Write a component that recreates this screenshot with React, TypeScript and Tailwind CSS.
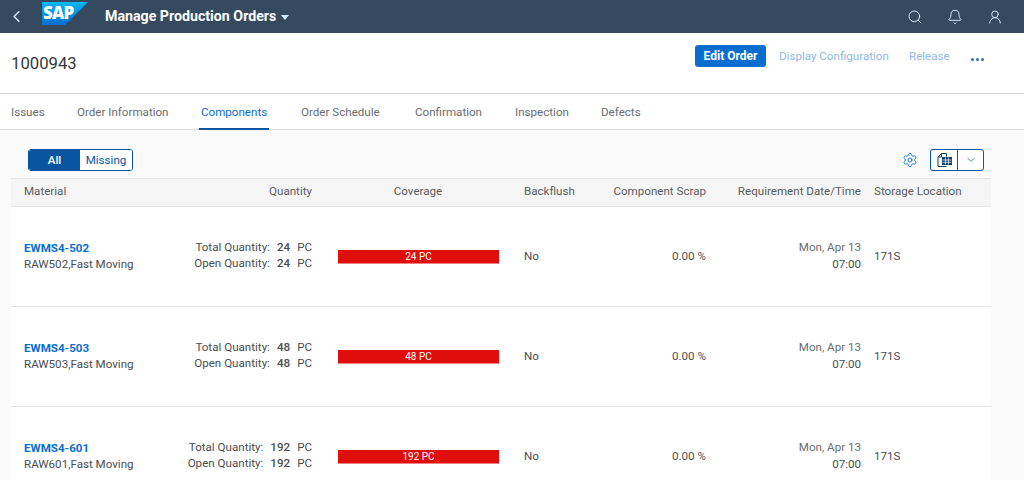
import React from 'react';
import { ChevronLeft, ChevronDown, Search, Bell, UserRound, Settings } from 'lucide-react';

const font = { fontFamily: 'Roboto, "Liberation Sans", sans-serif' };

const tabs = [
  { label: 'Issues', cls: 'ml-[11px] w-[66px]' },
  { label: 'Order Information', cls: 'w-[124px]' },
  { label: 'Components', cls: 'w-[100px]', active: true },
  { label: 'Order Schedule', cls: 'w-[114px]' },
  { label: 'Confirmation', cls: 'w-[100px]' },
  { label: 'Inspection', cls: 'w-[86px]' },
  { label: 'Defects', cls: 'w-[60px]' },
];

const rows = [
  { id: 'EWMS4-502', desc: 'RAW502,Fast Moving', qty: '24' },
  { id: 'EWMS4-503', desc: 'RAW503,Fast Moving', qty: '48' },
  { id: 'EWMS4-601', desc: 'RAW601,Fast Moving', qty: '192' },
];

const gridCols = 'grid grid-cols-[180px_134px_186px_88px_120px_142px_130px]';

function SapLogo() {
  return (
    <svg width="46" height="23" viewBox="0 0 46 23" className="shrink-0">
      <defs>
        <linearGradient id="sapBlue" x1="0" y1="0" x2="0" y2="1">
          <stop offset="0" stopColor="#00b8f1" />
          <stop offset="1" stopColor="#0a6ed1" />
        </linearGradient>
      </defs>
      <polygon points="0,0 46,0 23,23 0,23" fill="url(#sapBlue)" />
      <text x="1" y="17" fill="#fff" fontSize="17" fontWeight="800" letterSpacing="-0.8" fontFamily="Open Sans, sans-serif">
        SAP
      </text>
    </svg>
  );
}

function TableIcon() {
  return (
    <svg width="16" height="16" viewBox="0 0 16 16" fill="none" stroke="#0b3f73" strokeWidth="1">
      <path d="M5.5 1.5h5v3M5.5 1.5L2 5v9.5h8.5" />
      <path d="M2 5h3.5V1.5" />
      <rect x="6.5" y="5.5" width="9" height="7" fill="#0b3f73" />
      <path d="M6.5 8h9M6.5 10.3h9M9.5 5.5v7M12.5 5.5v7" stroke="#fff" strokeWidth="0.7" />
    </svg>
  );
}

function Row({ id, desc, qty }: { id: string; desc: string; qty: string }) {
  return (
    <div className={`${gridCols} h-[100px] items-center border-b border-[#e5e5e5] bg-white text-[11.6px] text-[#4a4d50]`}>
      <div className="-mt-[2px] pl-[13px]">
        <div className="leading-[16px] font-bold text-[#0a6ed1]">{id}</div>
        <div className="leading-[16px]">{desc}</div>
      </div>
      <div className="-mt-[3px] pr-[13px] leading-[16.5px]">
        <div className="flex justify-end whitespace-nowrap">
          Total Quantity:<span className="ml-[7px] font-medium">{qty}</span>
          <span className="ml-[7px]">PC</span>
        </div>
        <div className="flex justify-end whitespace-nowrap">
          Open Quantity:<span className="ml-[7px] font-medium">{qty}</span>
          <span className="ml-[7px]">PC</span>
        </div>
      </div>
      <div className="pl-[13px] pr-[12px]">
        <div className="flex h-[14px] items-center justify-center border-b border-[#f08080] bg-[#e00d0d] text-[10px] text-white">
          {qty} PC
        </div>
      </div>
      <div className="pl-[13px]">No</div>
      <div className="pr-[13px] text-right">0.00 %</div>
      <div className="-mt-[2px] text-right leading-[16.5px]">
        <div className="text-[#6a6d70]">Mon, Apr 13</div>
        <div>07:00</div>
      </div>
      <div className="pl-[13px]">171S</div>
    </div>
  );
}

export default function App() {
  return (
    <div className="flex h-screen w-full flex-col overflow-hidden bg-[#fafafa]" style={font}>
      {/* Shell bar */}
      <div className="flex h-[33px] shrink-0 items-center bg-[#354a5f] text-white">
        <ChevronLeft className="ml-[7px] h-[19px] w-[19px] text-[#d1e8ff]" strokeWidth={2} />
        <div className="ml-[16px] -mt-[7px]">
          <SapLogo />
        </div>
        <span className="ml-[17px] text-[14.2px] font-bold text-white">Manage Production Orders</span>
        <span className="ml-[5px] mt-[1px] h-0 w-0 border-x-[4px] border-t-[5px] border-x-transparent border-t-[#d1e8ff]" />
        <div className="ml-auto mr-[21px] flex items-center gap-[24px] text-[#d1e8ff]">
          <Search className="h-[16px] w-[16px]" strokeWidth={1.5} />
          <Bell className="h-[16px] w-[16px]" strokeWidth={1.5} />
          <UserRound className="h-[16px] w-[16px]" strokeWidth={1.5} />
        </div>
      </div>

      {/* Object header */}
      <div className="flex h-[61px] shrink-0 items-center border-b border-[#d9d9d9] bg-white">
        <span className="ml-[11px] mt-[1px] text-[16.7px] text-[#32363a]">1000943</span>
        <div className="ml-auto mr-[40px] -mt-[15px] flex items-center text-[11.6px] text-[#91b9e3]">
          <button className="flex h-[22px] w-[71px] items-center justify-center rounded-[3px] bg-[#0a6ed1] text-[12px] font-bold text-white">
            Edit Order
          </button>
          <span className="ml-[13px] mt-[2px] w-[110px] whitespace-nowrap">Display Configuration</span>
          <span className="ml-[20px] mt-[2px] w-[42px]">Release</span>
          <span className="ml-[20px] mt-[8px] flex gap-[2px]">
            <i className="h-[3px] w-[3px] rounded-full bg-[#2f6fb0]" />
            <i className="h-[3px] w-[3px] rounded-full bg-[#2f6fb0]" />
            <i className="h-[3px] w-[3px] rounded-full bg-[#2f6fb0]" />
          </span>
        </div>
      </div>

      {/* Tabs */}
      <div className="flex h-[36px] shrink-0 items-stretch border-b border-[#d9d9d9] bg-white pt-[2px] text-[11.6px] text-[#6a6d70]">
        {tabs.map((t) => (
          <div key={t.label} className={`relative flex items-center whitespace-nowrap ${t.cls} ${t.active ? 'text-[#0a6ed1]' : ''}`}>
            {t.label}
            {t.active && <span className="absolute bottom-[-1px] left-[-2px] h-[2px] w-[70px] bg-[#0854a0]" />}
          </div>
        ))}
      </div>

      {/* Toolbar */}
      <div className="flex h-[48px] shrink-0 items-center px-[28px] pr-[40px] pt-[12px]">
        <div className="flex h-[22px] overflow-hidden rounded-[3px] border border-[#0854a0] text-[11.6px]">
          <span className="flex w-[51px] items-center justify-center bg-[#0854a0] pt-[1px] font-medium text-white">All</span>
          <span className="flex w-[52px] items-center justify-center bg-white pt-[1px] text-[#0854a0]">Missing</span>
        </div>
        <Settings className="ml-auto h-[16px] w-[16px] text-[#0a6ed1]" strokeWidth={1.3} />
        <div className="ml-[12px] flex h-[22px] rounded-[3px] border border-[#0854a0] bg-white">
          <span className="flex w-[27px] items-center justify-center border-r border-[#0854a0]">
            <TableIcon />
          </span>
          <span className="flex w-[25px] items-center justify-center">
            <ChevronDown className="h-[12px] w-[12px] text-[#0854a0]" strokeWidth={1.5} />
          </span>
        </div>
      </div>

      {/* Table */}
      <div className="ml-[11px] w-[980px] text-[11.6px]">
        <div className={`${gridCols} h-[29px] items-center border-y border-[#e5e5e5] bg-[#f5f5f5] pb-[2px] text-[#5a5d60]`}>
          <div className="pl-[13px]">Material</div>
          <div className="pr-[13px] text-right">Quantity</div>
          <div className="text-center">Coverage</div>
          <div className="pl-[13px]">Backflush</div>
          <div className="pr-[13px] text-right whitespace-nowrap">Component Scrap</div>
          <div className="whitespace-nowrap text-right">Requirement Date/Time</div>
          <div className="pl-[13px] whitespace-nowrap">Storage Location</div>
        </div>
        {rows.map((r) => (
          <Row key={r.id} {...r} />
        ))}
      </div>
    </div>
  );
}
